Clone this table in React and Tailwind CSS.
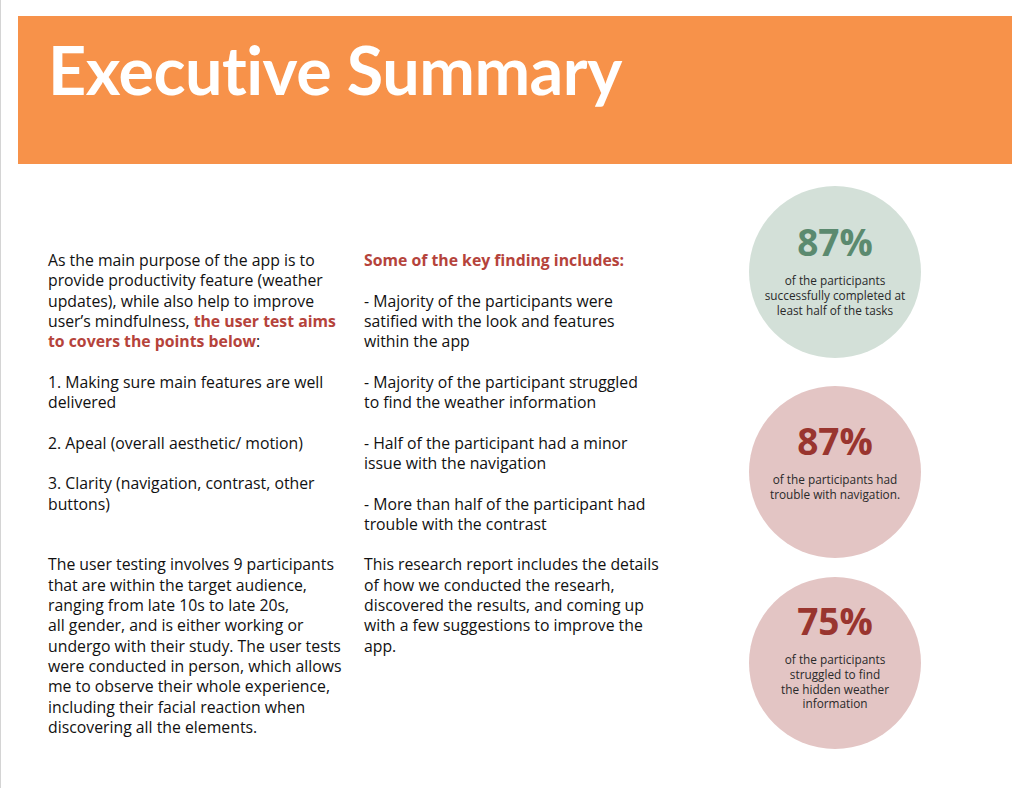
import React from "react";

const RED = "text-[#b5433b]";

const Lines = ({ lines }) => (
  <p>
    {lines.map((l, i) => (
      <span key={i} className="block whitespace-nowrap">
        {l}
      </span>
    ))}
  </p>
);

const StatCircle = ({ value, lines, bg, color, className = "" }) => (
  <div
    className={`w-[172px] h-[172px] rounded-full flex flex-col items-center ${bg} ${className}`}
  >
    <div className={`text-[37px] font-bold leading-none ${color}`}>{value}</div>
    <div className="mt-[13px] text-[11.8px] leading-[14.8px] text-[#2a2a2a] text-center whitespace-nowrap">
      {lines.map((l, i) => (
        <div key={i}>{l}</div>
      ))}
    </div>
  </div>
);

const App = () => {
  return (
    <div className="min-h-[788px] bg-white border-l border-[#d4d4d4] text-[#111] font-['Open_Sans','Noto_Sans',sans-serif]">
      <div className="pt-[16px] pl-[17px] pr-[12px]">
        <header className="h-[148px] bg-[#f7924a] pl-[30px] pt-[20px]">
          <h1 className="text-white font-bold text-[66.5px] leading-none tracking-[-0.5px] font-['Lato','Open_Sans',sans-serif]">
            Executive Summary
          </h1>
        </header>
      </div>

      <div className="flex pl-[47px]">
        <div className="w-[316px] pt-[86px] text-[15.8px] leading-[20.3px]">
          <p>
            <span className="block">As the main purpose of the app is to</span>
            <span className="block">provide productivity feature (weather</span>
            <span className="block">updates), while also help to improve</span>
            <span className="block whitespace-nowrap">
              user’s mindfulness,{" "}
              <b className={RED}>the user test aims</b>
            </span>
            <span className="block">
              <b className={RED}>to covers the points below</b>:
            </span>
          </p>
          <div className="h-[20.3px]" />
          <Lines lines={["1. Making sure main features are well", "delivered"]} />
          <div className="h-[20.3px]" />
          <Lines lines={["2. Apeal (overall aesthetic/ motion)"]} />
          <div className="h-[20.3px]" />
          <Lines lines={["3. Clarity (navigation, contrast, other", "buttons)"]} />
          <div className="h-[40.6px]" />
          <Lines
            lines={[
              "The user testing involves 9 participants",
              "that are within the target audience,",
              "ranging from late 10s to late 20s,",
              "all gender, and is either working or",
              "undergo with their study. The user tests",
              "were conducted in person, which allows",
              "me to observe their whole experience,",
              "including their facial reaction when",
              "discovering all the elements.",
            ]}
          />
        </div>

        <div className="w-[340px] pt-[86px] text-[15.8px] leading-[20.3px]">
          <p className={`font-bold ${RED}`}>Some of the key finding includes:</p>
          <div className="h-[20.3px]" />
          <Lines
            lines={[
              "- Majority of the participants were",
              "satified with the look and features",
              "within the app",
            ]}
          />
          <div className="h-[20.3px]" />
          <Lines
            lines={[
              "- Majority of the participant struggled",
              "to find the weather information",
            ]}
          />
          <div className="h-[20.3px]" />
          <Lines
            lines={[
              "- Half of the participant had a minor",
              "issue with the navigation",
            ]}
          />
          <div className="h-[20.3px]" />
          <Lines
            lines={[
              "- More than half of the participant had",
              "trouble with the contrast",
            ]}
          />
          <div className="h-[20.3px]" />
          <Lines
            lines={[
              "This research report includes the details",
              "of how we conducted the researh,",
              "discovered the results, and coming up",
              "with a few suggestions to improve the",
              "app.",
            ]}
          />
        </div>

        <div className="flex flex-col pl-[45px] pt-[22px]">
          <StatCircle
            className="pt-[37px]"
            value="87%"
            bg="bg-[#d3e0d8]"
            color="text-[#5b8a6f]"
            lines={[
              "of the participants",
              "successfully completed at",
              "least half of the tasks",
            ]}
          />
          <StatCircle
            className="mt-[28px] pt-[36px]"
            value="87%"
            bg="bg-[#e3c5c4]"
            color="text-[#99352f]"
            lines={["of the participants had", "trouble with navigation."]}
          />
          <StatCircle
            className="mt-[19px] pt-[25px]"
            value="75%"
            bg="bg-[#e3c5c4]"
            color="text-[#99352f]"
            lines={[
              "of the participants",
              "struggled to find",
              "the hidden weather",
              "information",
            ]}
          />
        </div>
      </div>
    </div>
  );
};

export default App;
